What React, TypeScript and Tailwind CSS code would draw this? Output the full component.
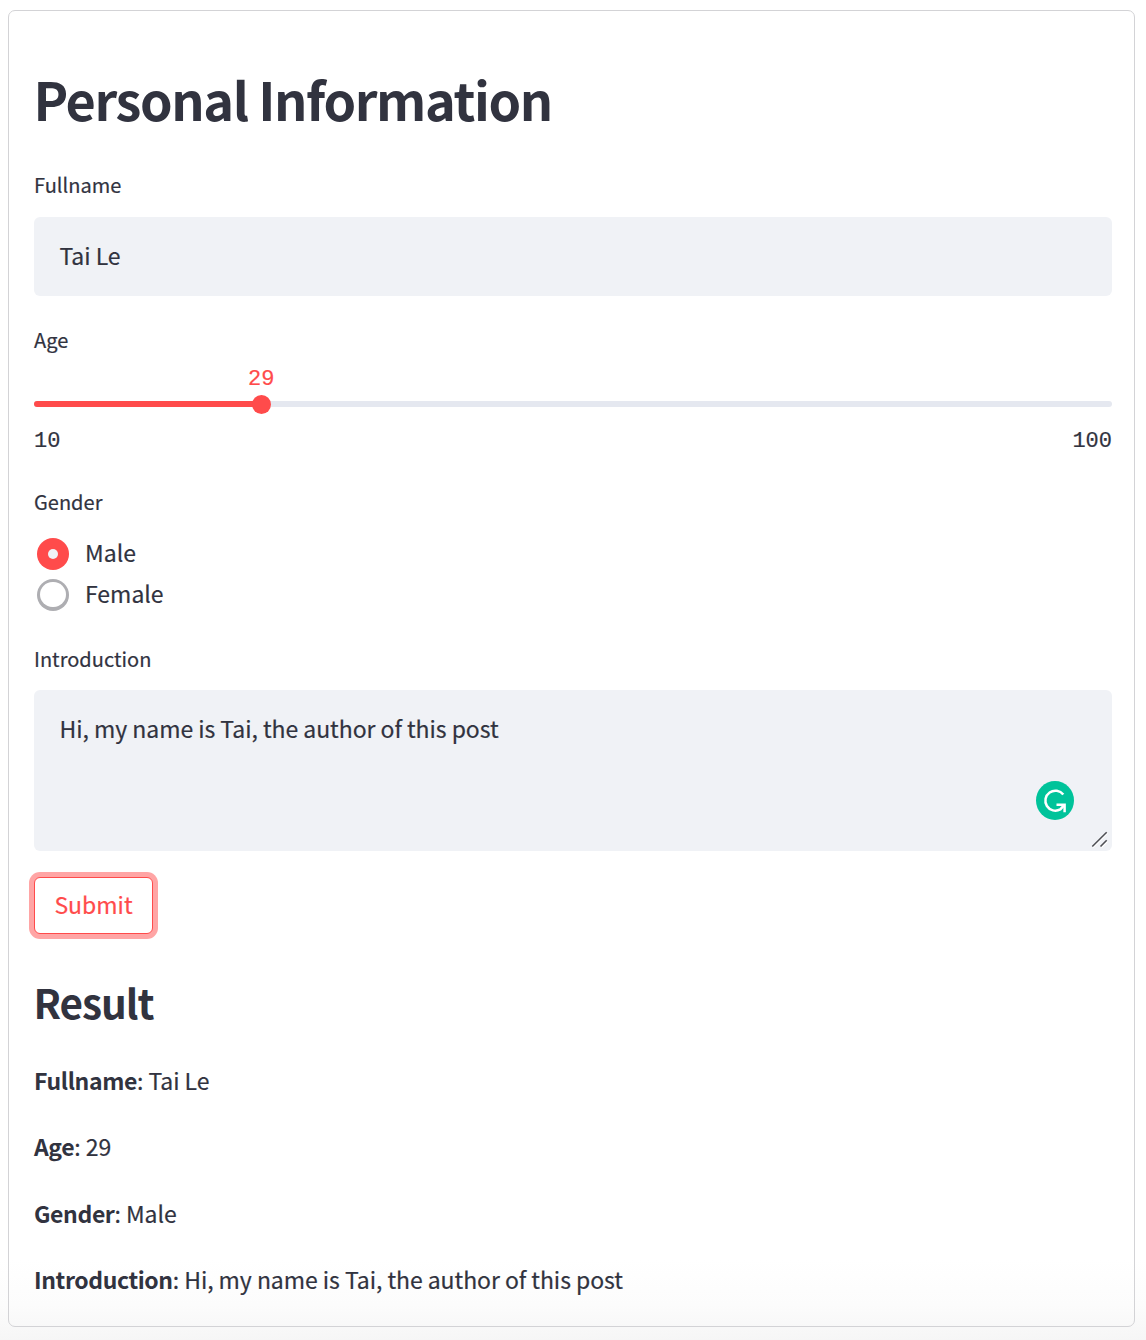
import type { ReactNode } from "react";

function Label({ children, className }: { children: ReactNode; className: string }) {
  return <div className={`h-8 text-[20px] leading-[34px] tracking-[0.02px] ${className}`}>{children}</div>;
}

function RadioOption({ label, checked }: { label: string; checked: boolean }) {
  return (
    <div className="flex h-[41px] items-start pl-[3px]">
      {checked ? (
        <span className="flex size-8 items-center justify-center rounded-full bg-[#ff4b4b]">
          <span className="size-[10px] rounded-full bg-[#f0f2f6]" />
        </span>
      ) : (
        <span className="size-8 rounded-full bg-[#aeaeb2] p-[3px]">
          <span className="block h-[25px] w-[26px] rounded-full bg-white" />
        </span>
      )}
      <span className="-mt-[2px] ml-4 text-[23px] leading-8">{label}</span>
    </div>
  );
}

function ResultRow({ name, value }: { name: string; value: string }) {
  return (
    <p className="h-[66.4px] text-[23px] leading-8 tracking-[-0.05px]">
      <strong className="font-bold tracking-[-0.38px] [-webkit-text-stroke:0px]">{name}</strong>: {value}
    </p>
  );
}

export default function App() {
  return (
    <div className="h-[1340px] w-[1146px] overflow-hidden bg-[linear-gradient(to_bottom,#ffffff_1260px,#fcfcfc_1305px,#f6f6f6_1340px)] pt-[10px] pl-2 font-['Noto_Sans_CJK_SC','Noto_Sans',sans-serif] text-[#31333f] [-webkit-text-stroke:0.2px]">
      <div className="h-[1317px] w-[1127px] rounded-[7px] border border-[#d3d3d6] pl-[25px]">
        <div className="flex w-[1078px] flex-col">
          <h1 className="mt-[57px] -ml-[0.5px] h-[60px] text-[52.2px] leading-[60px] font-bold tracking-[-1.4px] [-webkit-text-stroke:0px]">Personal Information</h1>

          <Label className="mt-10">Fullname</Label>
          <div className="mt-[17px] h-[79px] rounded-[6px] bg-[#f0f2f6] px-[25.5px] pt-[22px] text-[23px] leading-8 tracking-[-0.05px]">Tai Le</div>

          <Label className="mt-[27px]">Age</Label>
          <div className="relative mt-[46px] h-[6px] rounded-full bg-[#e5e8f0]">
            <div className="h-[6px] w-[228px] rounded-full bg-[#ff4b4b]" />
            <div className="absolute -top-[6.5px] left-[218px] size-[19px] rounded-full bg-[#ff4b4b]" />
            <div className="absolute -top-[33px] left-[214px] font-['Liberation_Mono',monospace] text-[22px] leading-6 text-[#ff4b4b]">29</div>
          </div>
          <div className="mt-[23px] flex h-6 justify-between font-['Liberation_Mono',monospace] text-[22px] leading-6">
            <span>10</span>
            <span>100</span>
          </div>

          <Label className="mt-[31px]">Gender</Label>
          <div className="mt-[21px] h-[82px]">
            <RadioOption label="Male" checked />
            <RadioOption label="Female" checked={false} />
          </div>

          <Label className="mt-[22px]">Introduction</Label>
          <div className="relative mt-4 h-[161px] rounded-[6px] bg-[#f0f2f6] px-[25.5px] pt-[22px] text-[23px] leading-8 tracking-[-0.04px]">
            Hi, my name is Tai, the author of this post
            <svg className="absolute top-[91px] left-[1002px]" width="38" height="39" viewBox="0 0 38 39" fill="none">
              <ellipse cx="19" cy="19.5" rx="19" ry="19.5" fill="#00c39a" />
              <path d="M27.3 13.6A10 10 0 1 0 24.3 28.4L28 24.4" stroke="#fff" strokeWidth="2.5" />
              <path d="M20.5 23.8H28.6V31.3" stroke="#fff" strokeWidth="2.5" />
            </svg>
            <svg className="absolute top-[141px] left-[1057px]" width="18" height="18" viewBox="0 0 18 18" fill="none">
              <path d="M2 16.5L16.5 2M10.5 16.5L16.5 10.5" stroke="#fff" strokeWidth="1.2" />
              <path d="M1.3 15.5L15.7 1.3M9.5 15.5L15.7 9.3" stroke="#505156" strokeWidth="1.6" />
            </svg>
          </div>

          <button className="mt-[26px] h-[57px] w-[119px] rounded-[6px] border border-[#ff4b4b] bg-white pb-[4px] text-[23px] leading-8 text-[#ff4b4b] shadow-[0_0_0_5px_#ffa5a5]">
            Submit
          </button>

          <h2 className="mt-[43px] -ml-[0.5px] h-[50px] text-[40.5px] leading-[50px] font-bold tracking-[-1.05px] [-webkit-text-stroke:0px]">Result</h2>
          <div className="mt-[37px]">
            <ResultRow name="Fullname" value="Tai Le" />
            <ResultRow name="Age" value="29" />
            <ResultRow name="Gender" value="Male" />
            <ResultRow name="Introduction" value="Hi, my name is Tai, the author of this post" />
          </div>
        </div>
      </div>
    </div>
  );
}
